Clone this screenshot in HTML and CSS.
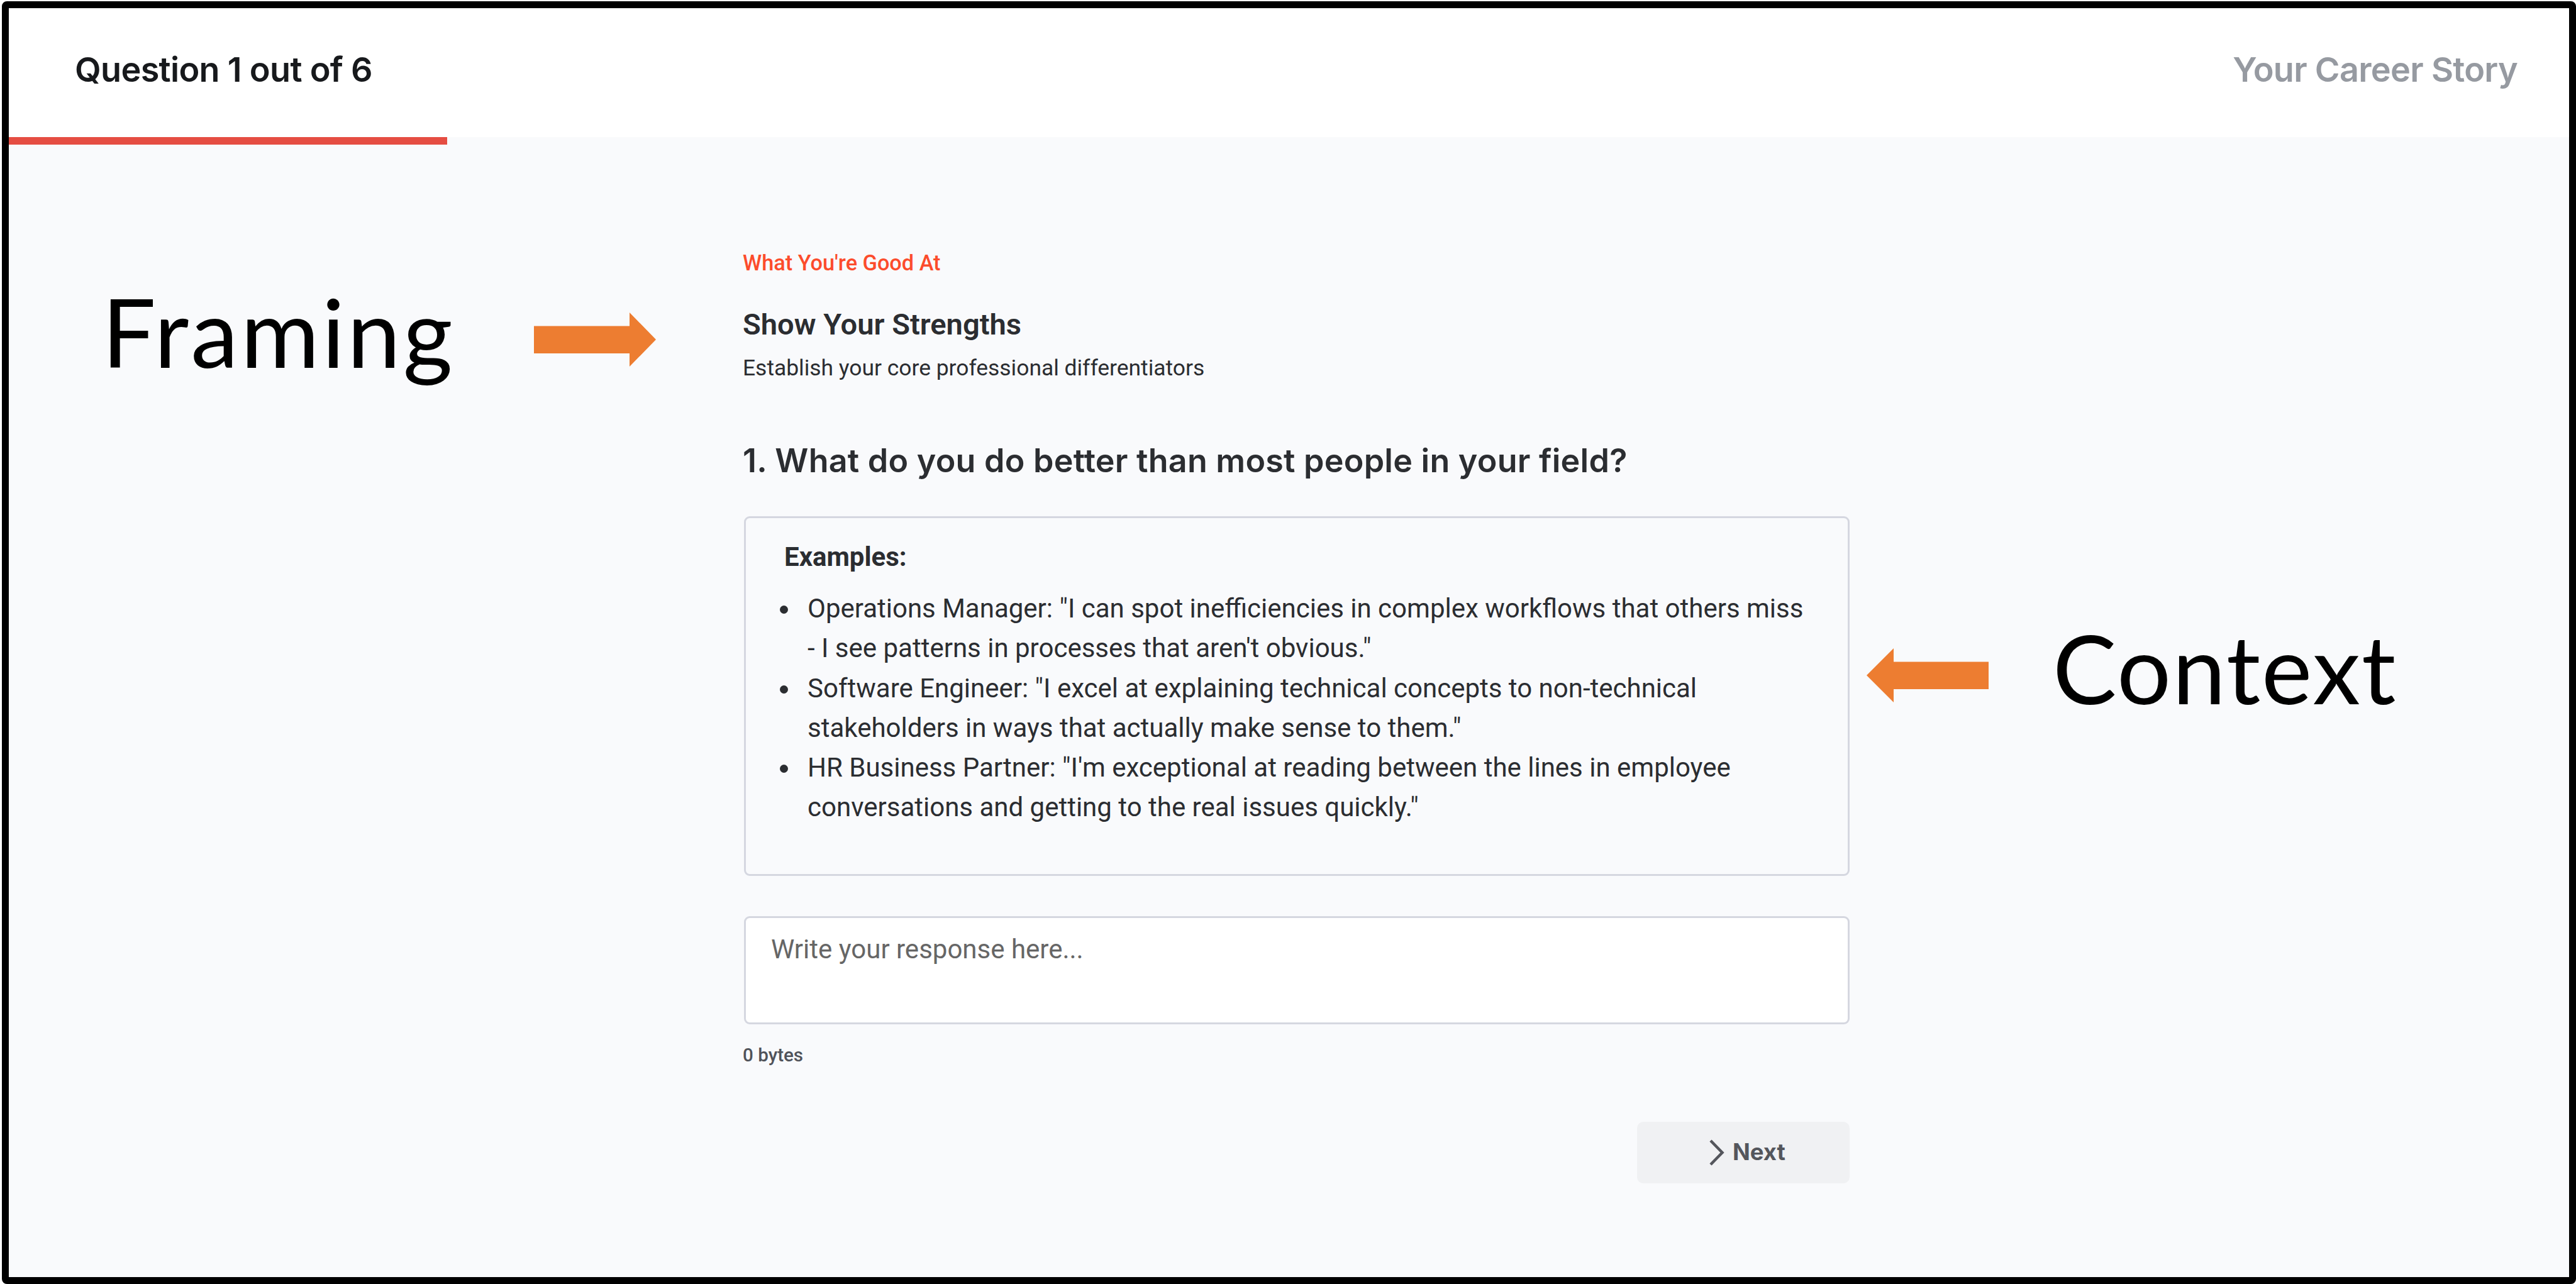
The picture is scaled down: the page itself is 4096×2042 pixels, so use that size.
FILE: index.html
```html
<!DOCTYPE html>
<html lang="en">
<head>
    <meta charset="UTF-8">
    <meta name="viewport" content="width=device-width, initial-scale=1.0">
    <title>Your Career Story</title>
    <link rel="stylesheet" href="styles.css">
</head>
<body>
    <div class="frame">
        <header class="header">
            <div class="step">Question 1 out of 6</div>
            <div class="story">Your Career Story</div>
        </header>
        <div class="progress"></div>

        <main class="content">
            <p class="category">What You're Good At</p>
            <h2 class="title">Show Your Strengths</h2>
            <p class="subtitle">Establish your core professional differentiators</p>
            <h1 class="question">1. What do you do better than most people in your field?</h1>

            <div class="examples">
                <p class="examples-label">Examples:</p>
                <ul class="examples-list">
                    <li>Operations Manager: "I can spot inefficiencies in complex workflows that others miss<br>- I see patterns in processes that aren't obvious."</li>
                    <li>Software Engineer: "I excel at explaining technical concepts to non-technical<br>stakeholders in ways that actually make sense to them."</li>
                    <li>HR Business Partner: "I'm exceptional at reading between the lines in employee<br>conversations and getting to the real issues quickly."</li>
                </ul>
            </div>

            <textarea class="answer" placeholder="Write your response here..."></textarea>
            <p class="bytes">0 bytes</p>

            <button class="next">
                <svg class="chevron" viewBox="0 0 24 42"><path d="M2 2 L20.5 21 L2 40"/></svg>
                <span class="next-label">Next</span>
            </button>
        </main>
    </div>

    <!-- Notes on top of the page -->
    <div class="note framing">Framing</div>
    <svg class="arrow arrow-right" viewBox="0 0 194 86"><path d="M0 21.5H152V0L194 43L152 86V65H0Z"/></svg>
    <svg class="arrow arrow-left" viewBox="0 0 194 86"><path d="M194 21.5H43V0L0 43L43 86V65H194Z"/></svg>
    <div class="note context">Context</div>
</body>
</html>
```
FILE: styles.css
```css
* {
    box-sizing: border-box;
}
body {
    margin: 0;
    background: #ffffff;
    font-family: Roboto, sans-serif;
    font-optical-sizing: none;
    color: #2b2d31;
    overflow: hidden;
}
p, h1, h2, ul {
    margin: 0;
    padding: 0;
}
.frame {
    width: 4093px;
    height: 2040px;
    margin: 2px 0 0 3px;
    border: 11px solid #000000;
    border-radius: 8px;
    background: #f9fafc;
}
.header {
    display: flex;
    justify-content: space-between;
    align-items: center;
    height: 205px;
    padding: 0 82px 10px 105px;
    background: #ffffff;
    font-family: Inter, sans-serif;
    font-size: 54px;
    font-weight: 600;
    letter-spacing: -0.7px;
}
.step {
    color: #17191c;
}
.story {
    color: #969aa1;
}
.progress {
    width: 697px;
    height: 12px;
    background: #e54d42;
}
.content {
    display: flex;
    flex-direction: column;
    width: 1758px;
    margin-left: 1169px;
    padding-top: 167px;
}
.category,
.title,
.subtitle,
.question,
.bytes {
    margin-left: -2px;
}
.category {
    font-size: 34.3px;
    font-weight: 500;
    line-height: 42px;
    color: #fc4c2c;
}
.title {
    margin-top: 49px;
    font-size: 47.1px;
    font-weight: 600;
    line-height: 56px;
}
.subtitle {
    margin-top: 20px;
    font-size: 35.4px;
    line-height: 42px;
}
.question {
    margin-top: 95px;
    font-family: Inter, sans-serif;
    font-size: 52px;
    font-weight: 600;
    letter-spacing: 0.25px;
    line-height: 64px;
    white-space: nowrap;
}
.examples {
    height: 572px;
    margin-top: 56px;
    padding: 31px 0 0 61px;
    border: 3px solid #d5d7e0;
    border-radius: 9px;
    font-size: 42px;
}
.examples-label {
    font-weight: 700;
    line-height: 62px;
}
.examples-list {
    margin-top: 19px;
    padding-left: 37px;
    list-style: none;
    line-height: 63px;
    white-space: nowrap;
}
.examples-list li:first-child {
    margin-bottom: 1px;
}
.examples-list li::before {
    content: "";
    float: left;
    width: 13px;
    height: 13px;
    margin: 27px 0 0 -44px;
    border-radius: 50%;
    background: #2b2d31;
}
.answer {
    display: block;
    width: 100%;
    height: 172px;
    margin-top: 64px;
    padding: 20px 40px;
    border: 3px solid #d5d7e0;
    border-radius: 9px;
    background: #ffffff;
    font-family: Roboto, sans-serif;
    font-size: 42px;
    line-height: 60px;
    resize: none;
}
.answer::placeholder {
    color: #666666;
}
.bytes {
    margin-top: 31px;
    font-size: 29.6px;
    font-weight: 500;
    line-height: 36px;
    color: #50535a;
}
.next {
    display: flex;
    align-items: center;
    align-self: flex-end;
    width: 338px;
    height: 98px;
    margin-top: 88px;
    padding: 0 0 0 115px;
    border: none;
    border-radius: 10px;
    background: #f0f1f3;
    color: #54565c;
    font-family: Inter, sans-serif;
    font-size: 36.5px;
    font-weight: 700;
    cursor: pointer;
}
.next-label {
    padding-bottom: 2px;
}
.chevron {
    width: 24px;
    height: 42px;
    margin-right: 13px;
    fill: none;
    stroke: #54565c;
    stroke-width: 4.5;
}
.note {
    position: absolute;
    font-family: Lato, sans-serif;
    font-size: 152px;
    line-height: 152px;
    color: #000000;
}
.framing {
    left: 162px;
    top: 450px;
    letter-spacing: 3.9px;
}
.context {
    left: 3264px;
    top: 985px;
    letter-spacing: 2px;
}
.arrow {
    position: absolute;
    width: 194px;
    height: 86px;
    fill: #ed7d31;
}
.arrow-right {
    left: 849px;
    top: 497px;
}
.arrow-left {
    left: 2968px;
    top: 1031px;
}
```
